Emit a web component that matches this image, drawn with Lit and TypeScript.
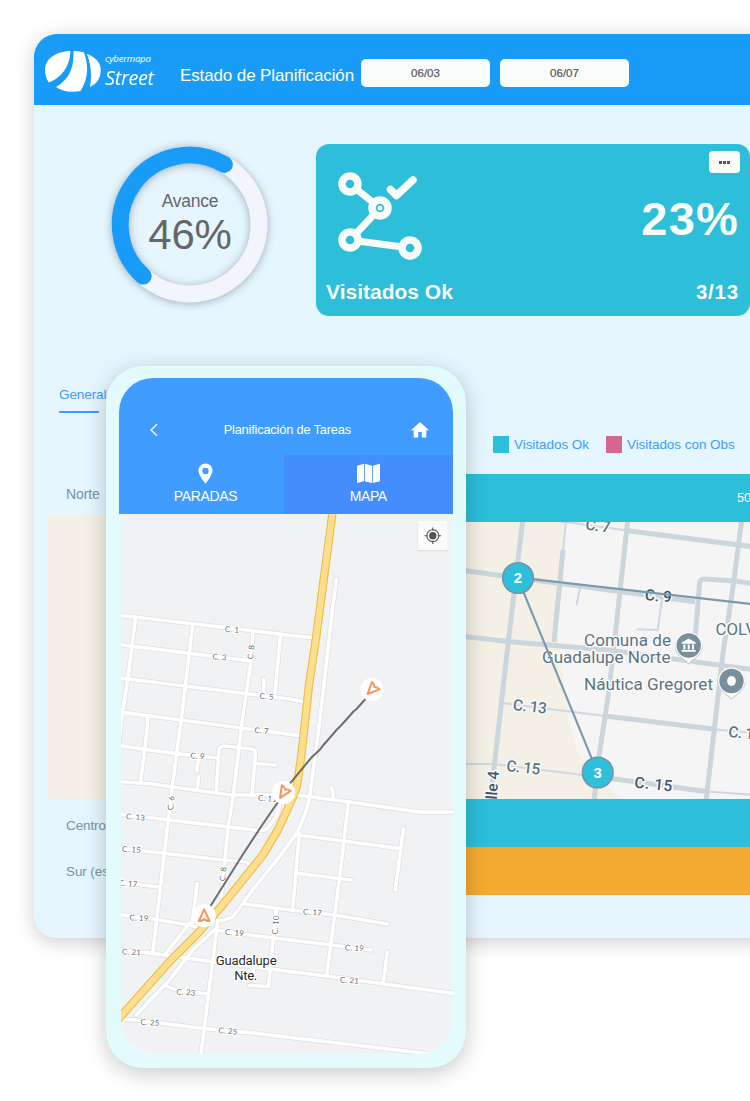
import { LitElement, html, css, svg } from "lit";
import { customElement } from "lit/decorators.js";

type Label = [text: string, x: number, y: number, rotation: number];

const STREETS = [
  "M118 615L195 624L253 630.7L290 635.3L313 637.7",
  "M118 644.4L190 653.3L248.3 660.7",
  "M118 677.6L185 686L245 693.3L290 699L305 702",
  "M118 711.6L181.7 720L241.7 728L300.7 735.7",
  "M118 745.5L176.7 753.7L219 758",
  "M118 781.5L153.3 784L173.3 787L231.7 795L293 795L310 796.7L350 802L416.7 811.7Q425 812.5 455 812",
  "M136 618.3L128.3 678.7L123 712L119 745",
  "M148.3 716L147 735L141 782",
  "M193.3 624.3L181.7 720L172.7 787L161.7 880L153.3 953",
  "M253.3 631L251.7 660L243.3 717L234 793L228.3 830L221.7 897",
  "M281 635L275 697", "M264.3 679V693",
  "M216.7 792L219.5 750Q220 746 225 746L252 749Q256 749.5 256 753L252.3 796",
  "M256.7 763.3L276 765", "M198.6 760L197.3 770.7", "M199 776.5L197.7 789",
  "M337 579L333.3 606.7L320 723.3L310 798L306 813L298.3 831.7L280 856.7L253 890L245 901L235 915Q231 919 220 921",
  "M217 928L193.3 950L170 980L136.7 1015",
  "M331.7 787Q334 791 333.3 799",
  "M298.3 835L400 848.3", "M404 828.5L395.7 890", "M349 802L340 878.3L327.3 975",
  "M300 833L293.3 907", "M298.3 873.3L351.7 880",
  "M245 904L283.3 909L335 915L388 924", "M276.7 909L269 986.5L250 985.5",
  "M254 967V972",
  "M216.7 930L250 935L331.7 945L371.5 950",
  "M118 949.5L153.3 953.3L213.3 961.7L273.3 969.3L326.7 976L455 993.5",
  "M387.7 952L384 982",
  "M118 1019L136 1020L203.3 1028.3L250 1032.7L426.7 1053.5",
  "M218.3 920L211.7 973.3L201 1058",
  "M165 985Q172 989 180 990.7L208.3 994",
  "M118 914.5L153.3 919L190 925L200 928", "M197.7 883.5L192.7 923", "M190 923.3L165 955",
  "M118 882L160 887", "M118 848L223.3 860L244 861.5Q249 862 251 867",
  "M118 814L226.7 826.7L260 830.5Q267 831 270 826L277 816L281 803",
];

const HIGHWAY =
  "M333 510L332.6 516L323.3 586.7L316.7 636.7L309.3 686.7L305 726.7L301.7 756.7L297.3 786.7Q290 806 278.3 830L263.3 855L250 871.7L221.7 906.7L196.7 935L170 961.7L118 1020";

const STREET_LABELS: Label[] = [
  ["C. 1", 232.5, 629.5, 3], ["C. 3", 220, 657, 4], ["C. 8", 251.5, 652, -84], ["C. 5", 267, 696.5, 4],
  ["C. 7", 262, 730.7, 4], ["C. 9", 198, 756, 4], ["C. 11", 268, 798.5, 5], ["C. 6", 171.5, 803, -83],
  ["C. 13", 136, 817, 5], ["C. 15", 132, 849.5, 4], ["C. 17", 128.5, 883.5, 5], ["C. 19", 139.5, 918, 4],
  ["C. 8", 223.5, 874, -83], ["C. 21", 132, 952, 4], ["C. 23", 186.5, 992.3, 4], ["C. 25", 150.5, 1022.5, 4],
  ["C. 25", 228.5, 1031, 5], ["C. 17", 313, 912.3, 5], ["C. 10", 276, 925, -85], ["C. 19", 235, 932.7, 5],
  ["C. 19", 355, 948, 4], ["C. 21", 350, 980.3, 4],
];

const MARKERS: [number, number, number][] = [[372.5, 689.5, 224], [284, 792.5, 213], [204.7, 915.7, 0]];

const AVENUES =
  "M523 518L507 653L493 777L490 802M563 550L554 642M628 518L615 637L608 697L598 763L594 802M742 518L733 587L723 653L706 802M628 530.7L755 547M695 640L699.5 584Q700 579 704 579L735 581L755 584M460 570L502 575.7L695 601.7M460 636L510 641.7L607 650L755 670M605 716L715 729.3M606 777.7L708 791.7";
const LANES =
  "M550 520L628 530.5M566 520L563 552M503 703L605 716M715 729.5L755 733M460 764H493L583 775L606 778M708 791.5L755 795M580 588L576.5 605M662 600L657.7 630L636.7 629.3";

@customElement("street-map")
export class StreetMap extends LitElement {
  static styles = css`
    :host { display: block; }
    svg { display: block; width: 100%; height: 100%; }
    path { fill: none; }
    .label { font: 8px Lato, sans-serif; fill: #6b6e71; text-anchor: middle; letter-spacing: .1px;
      paint-order: stroke; stroke: #fff; stroke-width: 2.4px; stroke-linejoin: round; }
    .town { font: 13.2px Roboto, sans-serif; fill: #26282a; text-anchor: middle;
      paint-order: stroke; stroke: #fff; stroke-width: 2.5px; }
  `;
  render() {
    return html`<svg viewBox="121.5 514 331.5 540" preserveAspectRatio="none">
      <rect x="121" y="514" width="332" height="541" fill="#f1f2f4"/>
      <g stroke-linecap="round" stroke-linejoin="round">
        ${STREETS.map((d) => svg`<path d=${d} stroke="#dcdddf" stroke-width="5"/>`)}
        ${STREETS.map((d) => svg`<path d=${d} stroke="#fff" stroke-width="3.7"/>`)}
        <path d=${HIGHWAY} stroke="#edbb4b" stroke-width="8.4"/>
        <path d=${HIGHWAY} stroke="#fcdf8b" stroke-width="6.2"/>
      </g>
      ${STREET_LABELS.map(([t, x, y, r]) => svg`<text class="label" x=${x} y=${y + 2.8} transform=${`rotate(${r} ${x} ${y})`}>${t}</text>`)}
      <text class="town" x="246.7" y="965" textLength="61">Guadalupe</text>
      <text class="town" x="246.3" y="980" textLength="23">Nte.</text>
      <path d="M366 699L357 709L354 711.5L342 725L337 730L324 745L320 750L312 757.5L290 784L283 796L275 807L262 826L243 855L211 906"
        stroke="#5c5c5e" stroke-opacity=".88" stroke-width="2"/>
      ${MARKERS.map(([x, y, r]) => svg`<g transform=${`translate(${x} ${y})`}>
        <circle r="11.5" fill="#fff"/>
        <path transform=${`rotate(${r})`} d="M0-6.3L5.3 5.3Q2.5 5.6 0 3.4Q-2.5 5.6-5.3 5.3Z" stroke="#f5985b" stroke-width="2.1" stroke-linejoin="round"/>
      </g>`)}
      <g transform="translate(433.3 535.7)">
        <rect x="-15.3" y="-15" width="30.5" height="30.5" fill="#d9dadc"/>
        <rect x="-15" y="-15" width="30" height="29.5" fill="#fbfbfc"/>
        <circle r="3.7" fill="#555"/>
        <path d="M6 0A6 6 0 1 1-6 0A6 6 0 1 1 6 0M0-8.3V-5M0 5V8.3M-8.3 0H-5M5 0H8.3" stroke="#555" stroke-width="1.1"/>
      </g>
    </svg>`;
  }
}

@customElement("zone-map")
export class ZoneMap extends LitElement {
  static styles = css`
    :host { display: block; }
    svg { display: block; width: 100%; height: 100%; }
    text { font-family: Roboto, sans-serif; fill: #5d7480; paint-order: stroke; stroke: #fafafa; stroke-width: 3px; stroke-linejoin: round; }
    .road { font-size: 15.5px; font-weight: 500; }
    .dark { fill: #40556a; }
    .place { font-size: 16.8px; }
    .stop { font: bold 15px "Liberation Sans", sans-serif; fill: #fff; stroke: none; text-anchor: middle; }
  `;
  render() {
    return html`<svg viewBox="48 516 702 283">
      <rect x="48" y="516" width="702" height="283" fill="#f5f5f5"/>
      <path d="M48 516H567L555 636Q559 642 560 650L568 717L576.7 750L593 775L620 799H48Z" fill="#f4f0e5"/>
      <path d=${LANES} fill="none" stroke="#cfd7e3" stroke-width="2"/>
      <path d=${AVENUES} fill="none" stroke="#cbd5dc" stroke-width="5" stroke-linejoin="round"/>
      <text class="road" transform="translate(585 529.5) rotate(7)" textLength="25">C. 7</text>
      <text class="road dark" transform="translate(644.5 600) rotate(5)" textLength="27">C. 9</text>
      <text class="road" transform="translate(512.5 710) rotate(6)" textLength="34">C. 13</text>
      <text class="road" transform="translate(506 771) rotate(6)" textLength="34">C. 15</text>
      <text class="road dark" transform="translate(634 787.5) rotate(6)" textLength="38">C. 15</text>
      <text class="road" transform="translate(728 737) rotate(5)" textLength="34">C. 13</text>
      <text class="road dark" transform="translate(495.5 818) rotate(-86)" textLength="47">Calle 4</text>
      <text class="place" x="715.5" y="634.5">COLVOLTI</text>
      <text class="place" x="584" y="645.5" textLength="87" lengthAdjust="spacingAndGlyphs">Comuna de</text>
      <text class="place" x="542" y="662.5" textLength="128.5" lengthAdjust="spacingAndGlyphs">Guadalupe Norte</text>
      <text class="place" x="584" y="689.5" textLength="129" lengthAdjust="spacingAndGlyphs">Náutica Gregoret</text>
      ${[[688.7, 645.5], [731.5, 681]].map(([x, y]) => svg`<g transform=${`translate(${x} ${y})`}>
        <path d="M-14 1A14 14 0 1 1 14 1C14 10 5 13 0 19C-5 13-14 10-14 1" fill="#c8cfd2"/>
        <path d="M-13.5 0A13.5 13.5 0 1 1 13.5 0C13.5 9 5 12 0 17.5C-5 12-13.5 9-13.5 0" fill="#fff"/>
        <circle r="12.2" fill="#78909c"/></g>`)}
      <path transform="translate(688.7 645.5)" fill="#fff" d="M0-7L7-3V-1.7H-7V-3ZM-5.3-1H-3.3V4H-5.3ZM-1-1H1V4H-1ZM3.3-1H5.3V4H3.3ZM-7 4.5H7V6.2H-7Z"/>
      <ellipse cx="731.5" cy="681" rx="4.4" ry="5" fill="#fff"/>
      <path d="M755 604.5L517.5 577.5L597.5 772.5" fill="none" stroke="#7899ae" stroke-width="2.1"/>
      ${[[518, 578, "2"], [597.7, 772.5, "3"]].map(([x, y, n]) => svg`
        <circle cx=${x} cy=${y} r="15.3" fill="#2ebfda" stroke="#7694aa" stroke-width="1.6"/>
        <text class="stop" x=${x} y=${Number(y) + 5}>${n}</text>`)}
    </svg>`;
  }
}

@customElement("phone-app")
export class PhoneApp extends LitElement {
  static styles = css`
    :host { display: block; box-sizing: border-box; width: 360px; height: 702px; padding: 12px 13px 13px 13px;
      border-radius: 37px; background: #e4fbfd; font-family: "Liberation Sans", Arial, sans-serif; color: #fff;
      box-shadow: 0 5px 22px rgba(0, 0, 0, .22); }
    .screen { display: flex; flex-direction: column; height: 676px; width: 333.5px; border-radius: 34px; overflow: hidden; }
    .bar { display: grid; grid-template-columns: 70px 1fr 66px; align-items: center; height: 77px; flex: none;
      box-sizing: border-box; padding-top: 26px; background: #409dff; }
    .bar svg { justify-self: center; }
    .title { text-align: center; margin-left: -1px; font-size: 12.8px; letter-spacing: -.18px; white-space: nowrap; }
    .tabs { display: grid; grid-template-columns: 165px 1fr; height: 59px; flex: none; }
    .tab { display: flex; flex-direction: column; align-items: center; padding: 8px 0 0 8px; background: #409dff; font-size: 14px; line-height: 16px; letter-spacing: -.35px; }
    .tab.on { background: #448dff; padding: 8px 0 0; }
    .tab svg { margin-bottom: 4px; }
    street-map { height: 540px; margin-left: 2px; flex: none; border-radius: 0 0 34px 34px; overflow: hidden; }
  `;
  render() {
    return html`<div class="screen">
      <div class="bar">
        <svg width="10" height="14" fill="none" stroke="#fff" stroke-width="1.3"><path d="M8 1.2L2 7L8 12.8"/></svg>
        <span class="title">Planificación de Tareas</span>
        <svg width="18" height="16" fill="#fff"><path d="M9 0L18 8.3H15.3V15.5H10.8V10H7.2V15.5H2.7V8.3H0Z"/></svg>
      </div>
      <div class="tabs">
        <div class="tab"><svg width="15" height="21" fill="#fff" fill-rule="evenodd"><path d="M7.5.5A7 7 0 0 0 .5 7.5C.5 12.5 7.5 20.5 7.5 20.5S14.5 12.5 14.5 7.5A7 7 0 0 0 7.5.5ZM7.5 4.7A3.2 3.2 0 1 1 7.5 11.1A3.2 3.2 0 0 1 7.5 4.7Z"/></svg>PARADAS</div>
        <div class="tab on"><svg width="23" height="21" fill="#fff"><path d="M0 2.7L7 .8V18.2L0 20ZM7.8 .8L15 2.7V20L7.8 18.2ZM15.8 2.7L23 .8V18.2L15.8 20Z"/></svg>MAPA</div>
      </div>
      <street-map></street-map>
    </div>`;
  }
}

@customElement("app-root")
export class AppRoot extends LitElement {
  static styles = css`
    :host { display: block; position: relative; width: 750px; height: 1101px; overflow: hidden; box-sizing: border-box;
      padding: 34px 0 0 34px; background: #fff; font-family: "Liberation Sans", Arial, sans-serif; }
    .dash { width: 760px; height: 904px; border-radius: 23px; overflow: hidden; background: #e6f6fe; }
    .shade { border-radius: 23px; width: 760px; box-shadow: 0 4px 20px rgba(0, 0, 0, .2); }
    header { display: flex; align-items: center; height: 71px; background: #199cf8; color: #fff; }
    .logo { margin: 4px 0 0 11px; }
    .brand { display: flex; flex-direction: column; width: 75px; margin: 3px 0 0 4px; font-family: "Open Sans", sans-serif; font-style: italic; }
    .brand small { font-size: 9.6px; line-height: 12px; letter-spacing: -.22px; font-weight: 500; }
    .brand b { font-size: 20.5px; line-height: 24px; letter-spacing: -.35px; font-weight: 500; transform: scaleX(.97); transform-origin: left; }
    h1 { margin: 12px 0 0; width: 181px; font-size: 17px; font-weight: 400; letter-spacing: -.12px; white-space: nowrap; }
    .date { display: grid; place-items: center; width: 129px; height: 28px; margin: 7px 10px 0 0; border-radius: 5px; background: #fafcfc; color: #555; font-size: 11.5px; -webkit-text-stroke: .2px #555; }
    .stats { display: flex; height: 172px; padding-top: 39px; }
    .gauge { display: grid; width: 282px; height: 172px; }
    .gauge > * { grid-area: 1 / 1; }
    .ring { overflow: visible; filter: drop-shadow(0 1px 4px rgba(60, 75, 80, .42)); }
    .avance { display: flex; flex-direction: column; align-items: center; width: 312px; color: #666; }
    .avance span { margin-top: 47px; font-size: 17.5px; line-height: 20px; letter-spacing: -.25px; }
    .avance strong { font-weight: 400; font-size: 42px; line-height: 46px; letter-spacing: -.2px; margin-top: 1px; }
    .card { display: grid; grid-template: 136px 36px / 1fr 1fr; box-sizing: border-box; width: 434px; border-radius: 13px; background: #2dbeda; color: #fafcf9; font-weight: bold; }
    .side { display: flex; flex-direction: column; align-items: flex-end; }
    .more { display: flex; align-items: center; justify-content: center; gap: 1.5px; width: 31px; height: 22px; margin: 7px 10px 0 0; background: #fafcf9; border-radius: 4px; }
    .more i { width: 2.5px; height: 3px; background: #555; }
    .pct { margin: 20px 11px 0 0; font-size: 47px; line-height: 52px; letter-spacing: 1.2px; }
    .name { padding-left: 10px; font-size: 21px; line-height: 23px; white-space: nowrap; }
    .count { padding-right: 11px; font-size: 20.5px; line-height: 23px; letter-spacing: .8px; text-align: right; }
    .tools { display: grid; grid-template-columns: 459px 1fr; height: 158px; color: #3d9cfd; font-size: 13.5px; }
    .general { justify-self: start; height: 24px; margin: 71px 0 0 25px; width: 40px; border-bottom: 2px solid #3d9cfd; white-space: nowrap; font-size: 13.6px; line-height: 16px; letter-spacing: -.15px; }
    .legend { display: flex; align-items: center; height: 18px; margin-top: 119px; white-space: nowrap; letter-spacing: -.05px; }
    .swatch { width: 16px; height: 17px; margin-right: 5px; background: #2dbeda; }
    .swatch.obs { margin-left: 17px; background: #d8678f; }
    .row { display: grid; grid-template-columns: 386px 1fr; height: 48px; color: #7493a9; font-size: 13.5px; }
    .row > span { align-self: center; padding: 5px 0 0 32px; letter-spacing: -.1px; white-space: nowrap; }
    .row > .fill { background: #2dbeda; color: #fff; display: flex; align-items: center; padding-left: 317px; }
    .row.north { position: relative; height: 42px; }
    .row.north > .fill { height: 48px; font-size: 12.5px; }
    .row.north > span { align-self: start; padding-top: 12px; font-size: 14px; }
    .row > .late { background: #f5ab31; }
    zone-map { width: 702px; height: 283px; margin-left: 14px; }
    .row.south > span { padding-top: 0; }
    phone-app { position: absolute; left: 106px; top: 366px; }
  `;
  render() {
    return html`<div class="shade"><main class="dash">
      <header>
        <svg class="logo" width="56" height="43" fill="#fff"><path d="M25.5 1C14 1 0 7 0 20Q0 27 3.8 32.5C16 28 25 17 25.5 1ZM28.5 1Q34 .5 39 2.5C44 16 43 30 35.5 41Q20 43.5 11 37C25 29 29 17 28.5 1ZM42 4Q56 9 55.8 21Q55.5 32 45 37Q48 20 42 4Z"/></svg>
        <div class="brand"><small>cybermapa</small><b>Street</b></div>
        <h1>Estado de Planificación</h1>
        <div class="date">06/03</div><div class="date">06/07</div>
      </header>
      <section class="stats">
        <div class="gauge">
          <svg class="ring" width="282" height="172" fill="none" stroke-width="17">
            <circle cx="155.6" cy="80.5" r="69.4" stroke="#f2f5fb"/>
            <path d="M190.3 20.4A69.4 69.4 0 0 0 109.2 132.1" stroke="#199cf8" stroke-linecap="round"/>
          </svg>
          <div class="avance"><span>Avance</span><strong>46%</strong></div>
        </div>
        <div class="card">
          <svg width="120" height="130" fill="none" stroke="#fafcf9" stroke-width="7">
            <path d="M34 40L64 64L34 96L94 104" stroke-linejoin="round"/>
            <path d="M74.5 45.5L80.5 51.5L97 36" stroke-width="7.5" stroke-linecap="round" stroke-linejoin="round"/>
            <g fill="#2dbeda" stroke-width="7.5"><circle cx="34" cy="40" r="8"/><circle cx="64" cy="64" r="8"/><circle cx="34" cy="96" r="8"/><circle cx="94" cy="104" r="8"/></g>
            <circle cx="64" cy="64" r="2.5" fill="#fafcf9" stroke="none"/>
          </svg>
          <div class="side"><div class="more"><i></i><i></i><i></i></div><div class="pct">23%</div></div>
          <div class="name">Visitados Ok</div><div class="count">3/13</div>
        </div>
      </section>
      <section class="tools">
        <div class="general">General</div>
        <div class="legend"><i class="swatch"></i>Visitados Ok<i class="swatch obs"></i>Visitados con Obs</div>
      </section>
      <section>
        <div class="row north"><span>Norte</span><div class="fill">50%</div></div>
        <zone-map></zone-map>
        <div class="row"><span>Centro</span><div class="fill"></div></div>
        <div class="row south"><span>Sur (este)</span><div class="fill late"></div></div>
      </section>
    </main></div>
    <phone-app></phone-app>`;
  }
}
